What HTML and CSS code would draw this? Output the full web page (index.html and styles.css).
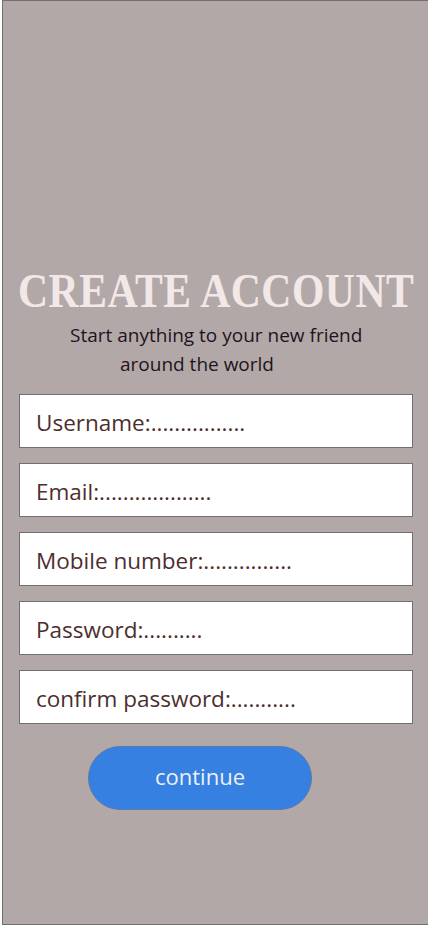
FILE: index.html
```html
<!DOCTYPE html>
<html>
<head>
<meta charset="utf-8">
<link rel="stylesheet" href="styles.css">
</head>
<body>
<div class="frame">
  <h1 class="title">CREATE ACCOUNT</h1>
  <p class="sub sub1">Start anything to your new friend</p>
  <p class="sub sub2">around the world</p>
  <div class="fields">
    <div class="field">Username:................</div>
    <div class="field">Email:...................</div>
    <div class="field">Mobile number:...............</div>
    <div class="field">Password:..........</div>
    <div class="field">confirm password:...........</div>
  </div>
  <div class="btnrow"><button class="btn">continue</button></div>
</div>
</body>
</html>
```
FILE: styles.css
```css
html, body { margin: 0; padding: 0; background: #fff; }
body { width: 428px; height: 926px; overflow: hidden; }
.frame {
  margin-left: 2px;
  width: 430px;
  height: 925px;
  box-sizing: border-box;
  border: 1px solid #707070;
  background: #b3a8a8;
  padding-top: 266px;
  font-family: "Open Sans", sans-serif;
}
.title {
  margin: 0 0 0 15px;
  font-family: "Liberation Serif", serif;
  font-weight: bold;
  font-size: 49px;
  line-height: 48px;
  letter-spacing: 0.6px;
  color: #f2e8e8;
  white-space: nowrap;
  transform: scaleX(0.85);
  transform-origin: left center;
}
.sub { margin: 0; font-size: 19px; line-height: 29px; color: #1e1420; }
.sub1 { margin-left: 67px; margin-top: 6px; }
.sub2 { margin-left: 117px; }
.fields { display: flex; flex-direction: column; gap: 15px; margin: 15px 0 0 16px; }
.field {
  width: 394px;
  height: 54px;
  box-sizing: border-box;
  border: 1px solid #707070;
  background: #fff;
  padding-left: 16px;
  font-size: 22.5px;
  line-height: 56px;
  color: #4d2e2e;
}
.btnrow { margin: 22px 0 0 85px; }
.btn {
  width: 224px;
  height: 64px;
  border-radius: 32px;
  border: 1px solid #5f7aa8;
  background: #3580e0;
  color: #eef0f8;
  font-family: "Open Sans", sans-serif;
  font-size: 22px;
  padding: 0 0 4px 0;
}
```
